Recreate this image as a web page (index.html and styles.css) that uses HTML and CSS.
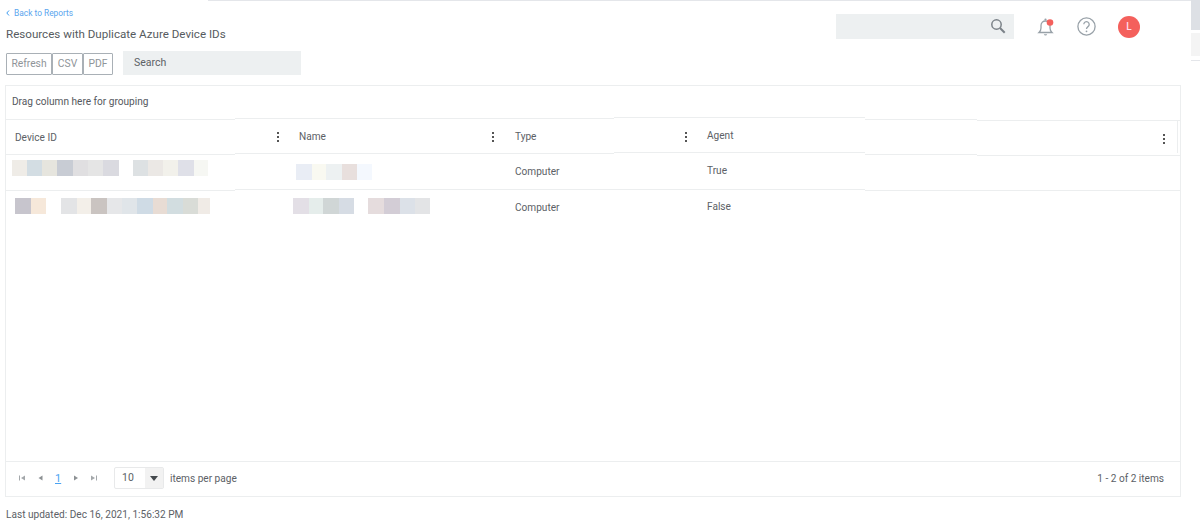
FILE: index.html
```html
<!DOCTYPE html>
<html lang="en">
<head>
<meta charset="utf-8">
<title>Resources with Duplicate Azure Device IDs</title>
<link rel="stylesheet" href="styles.css">
</head>
<body>
<div class="frame">
  <main class="page">
    <div class="top-line"></div>
    <header class="top">
      <div class="heading">
        <a class="back" href="#"><svg class="back-icon" width="4" height="6" viewBox="0 0 4 6"><path d="M3 .5 .8 3 3 5.500" fill="none" stroke="#3d9bf0" stroke-width="1"/></svg>Back to Reports</a>
        <h1 class="title">Resources with Duplicate Azure Device IDs</h1>
        <div class="tools">
          <button class="btn btn-refresh">Refresh</button>
          <button class="btn btn-csv">CSV</button>
          <button class="btn btn-pdf">PDF</button>
          <div class="search-report">Search</div>
        </div>
      </div>
      <div class="actions">
        <div class="global-search">
          <svg width="16" height="16" viewBox="0 0 16 16"><circle cx="6.500" cy="6.500" r="4.700" fill="none" stroke="#7b8288" stroke-width="1.500"/><path d="M10 10l4.700 4.700" stroke="#7b8288" stroke-width="2"/></svg>
        </div>
        <svg class="bell" width="18" height="20" viewBox="0 0 18 20"><path d="M2 15.500c1.500-1.300 2-2.300 2-4.500V8.500C4 5.800 6 4 8.500 4S13 5.800 13 8.500V11c0 2.200.5 3.200 2 4.500z" fill="none" stroke="#98a1a8" stroke-width="1.300"/><circle cx="8.500" cy="2.500" r="1.100" fill="#98a1a8"/><path d="M6.800 17.300a1.800 1.800 0 0 0 3.400 0z" fill="#98a1a8"/><circle cx="13" cy="5.500" r="3.300" fill="#f4605c"/></svg>
        <svg class="help" width="19" height="19" viewBox="0 0 19 19"><circle cx="9.500" cy="9.500" r="8.600" fill="none" stroke="#98a1a8" stroke-width="1.300"/><path d="M6.800 7.300a2.700 2.700 0 1 1 4.200 2.300c-1 .7-1.500 1.200-1.500 2.500" fill="none" stroke="#98a1a8" stroke-width="1.300"/><circle cx="9.500" cy="14.300" r=".9" fill="#98a1a8"/></svg>
        <div class="avatar">L</div>
      </div>
    </header>

    <section class="grid">
      <div class="group-bar">Drag column here for grouping</div>
      <div class="rule">
        <i class="seg seg-a"></i><i class="seg seg-b up"></i><i class="seg seg-c up2"></i><i class="seg seg-d"></i><i class="seg seg-e dn"></i>
      </div>
      <div class="row head">
        <div class="cell c1 lo">Device ID<span class="kebab"></span></div>
        <div class="cell c2 mid">Name<span class="kebab"></span></div>
        <div class="cell c3 mid">Type<span class="kebab"></span></div>
        <div class="cell c4 hi">Agent<span class="kebab"></span></div>
      </div>
      <div class="rule">
        <i class="seg seg-a"></i><i class="seg seg-b up"></i><i class="seg seg-c up2"></i><i class="seg seg-d"></i><i class="seg seg-e dn"></i>
      </div>
      <div class="row body">
        <div class="cell c1 blur-1">
          <span class="tiles"><b class="w15 t1"></b><b class="w15 t2"></b><b class="w15 t3"></b><b class="w16 t4"></b><b class="w15 t5"></b><b class="w15 t6"></b><b class="w16 t7"></b></span>
          <span class="tiles gap"><b class="w15 t8"></b><b class="w15 t9"></b><b class="w15 t10"></b><b class="w16 t11"></b><b class="w14 t12"></b></span>
        </div>
        <div class="cell c2 blur-2">
          <span class="tiles"><b class="w16 n1"></b><b class="w14 n2"></b><b class="w16 n3"></b><b class="w15 n4"></b><b class="w15 n5"></b></span>
        </div>
        <div class="cell c3 mid">Computer</div>
        <div class="cell c4 hi">True</div>
      </div>
      <div class="rule">
        <i class="seg seg-a"></i><i class="seg seg-b up"></i><i class="seg seg-c up"></i><i class="seg seg-d"></i><i class="seg seg-e"></i>
      </div>
      <div class="row body">
        <div class="cell c1 blur-3">
          <span class="tiles"><b class="w16 r1"></b><b class="w15 r2"></b></span>
          <span class="tiles gap-b"><b class="w16 r3"></b><b class="w14 r4"></b><b class="w16 r5"></b><b class="w15 r6"></b><b class="w15 r7"></b><b class="w16 r8"></b><b class="w14 r9"></b><b class="w16 r10"></b><b class="w15 r11"></b><b class="w12 r12"></b></span>
        </div>
        <div class="cell c2 blur-4">
          <span class="tiles"><b class="w16 s1"></b><b class="w14 s2"></b><b class="w16 s3"></b><b class="w15 s4"></b></span>
          <span class="tiles gap-c"><b class="w16 s5"></b><b class="w16 s6"></b><b class="w15 s7"></b><b class="w15 s8"></b></span>
        </div>
        <div class="cell c3 mid">Computer</div>
        <div class="cell c4 hi">False</div>
      </div>
      <div class="spacer"></div>
      <footer class="pager">
        <div class="pager-left">
          <svg class="pg" width="8" height="8" viewBox="0 0 8 8"><path d="M1 1.500h1v5H1zM7 1.500v5L3 4z" fill="#a4a8ab"/></svg>
          <svg class="pg" width="8" height="8" viewBox="0 0 8 8"><path d="M6.500 1.500v5L2.500 4z" fill="#8d9194"/></svg>
          <a class="page-num" href="#">1</a>
          <svg class="pg" width="8" height="8" viewBox="0 0 8 8"><path d="M2 1.500v5L6 4z" fill="#8d9194"/></svg>
          <svg class="pg" width="8" height="8" viewBox="0 0 8 8"><path d="M1 1.500v5L5 4zM6 1.500h1v5H6z" fill="#a4a8ab"/></svg>
          <div class="size-select"><span class="size-value">10</span><span class="size-arrow"><svg width="8" height="5" viewBox="0 0 8 5"><path d="M0 0h8L4 5z" fill="#44494d"/></svg></span></div>
          <span class="per-page">items per page</span>
        </div>
        <div class="count">1 - 2 of 2 items</div>
      </footer>
    </section>
    <p class="updated">Last updated: Dec 16, 2021, 1:56:32 PM</p>
  </main>
  <aside class="side">
    <div class="side-a"></div>
    <div class="side-b"></div>
    <div class="side-c"></div>
  </aside>
</div>
</body>
</html>
```

FILE: styles.css
```css
* { box-sizing: border-box; }
html, body { margin: 0; height: 100%; background: #fff; overflow: hidden; }
body { font-family: Roboto, "Liberation Sans", sans-serif; font-size: 10.1px; color: #5c6166; }
.frame { display: flex; height: 523px; }
.page { width: 1191px; flex: none; padding: 0 10px 0 5px; }
.top-line { height: 1px; margin: 0 -10px 0 203px; background: #e4e6ea; }

.top { display: flex; justify-content: space-between; height: 84px; }
.heading { padding-left: 1px; }
.back { display: flex; align-items: center; gap: 4px; margin-top: 7px; height: 10px; color: #5aa5ee; font-size: 8.4px; text-decoration: none; }
.title { margin: 8px 0 0; font-size: 11.6px; line-height: 16px; font-weight: 400; color: #565b60; }
.tools { display: flex; align-items: flex-start; margin-top: 9px; }
.btn { height: 22px; margin-top: 2px; padding: 0 0 2px; background: #fff; border: 1px solid #a9b0b6; border-radius: 1px; color: #8f9499; font: 10.3px Roboto, sans-serif; }
.btn-refresh { width: 46px; }
.btn-csv { width: 31px; }
.btn-pdf { width: 30px; }
.search-report { width: 178px; height: 24px; margin-left: 10px; padding-left: 11px; line-height: 24px; background: #edf0f1; color: #5c6166; font-size: 10.5px; }

.actions { display: flex; align-items: flex-start; padding-top: 13px; margin-right: 41px; }
.global-search { width: 178px; height: 25px; padding: 4px 8px 0 0; background: #edf0f1; display: flex; justify-content: flex-end; }
.bell { margin: 3px 0 0 23px; }
.help { margin: 3px 0 0 22px; }
.avatar { width: 22px; height: 22px; margin: 2px 0 0 22px; border-radius: 50%; background: #f4605c; color: #fde; font-size: 10px; font-weight: 500; line-height: 22px; text-align: center; }

.grid { width: 1176px; height: 412px; border: 1px solid #eceeef; display: flex; flex-direction: column; }
.group-bar { height: 32px; flex: none; padding-left: 6px; line-height: 31px; color: #55595e; }
.rule { display: flex; height: 2px; flex: none; }
.seg { display: block; height: 1px; background: #eceeef; margin-top: 1px; }
.seg.up { margin-top: 0; }
.seg.up2 { margin-top: -1px; }
.seg.dn { margin-top: 2px; }
.seg-a { width: 229px; }
.seg-b { width: 379px; }
.seg-c { width: 251px; }
.seg-d { width: 112px; }
.seg-e { flex: 1; }
.row { display: flex; flex: none; }
.head { height: 33px; }
.body { height: 34px; }
.cell { position: relative; height: 100%; }
.c1 { width: 288px; padding-left: 9px; }
.c2 { width: 216px; padding-left: 5px; }
.c3 { width: 192px; padding-left: 5px; }
.c4 { flex: 1; padding-left: 5px; }
.head .c4 { border-right: 1px solid #eceeef; margin-right: 2px; }
.lo { line-height: 35px; }
.mid { line-height: 34px; }
.hi { line-height: 32px; }
.kebab { position: absolute; right: 15px; top: 12px; width: 2px; height: 10px; background: radial-gradient(circle at 1px 1px, #555 1px, transparent 1.2px) 0 0 / 2px 4px repeat-y; }
.head .c2 .kebab { right: 16px; }
.head .c4 .kebab { right: 12px; top: 14px; }
.blur-1, .blur-2, .blur-3, .blur-4 { display: flex; }
.blur-1 { padding: 5px 0 0 6px; }
.blur-2 { padding: 9px 0 0 2px; }
.blur-3 { padding: 7px 0 0 9px; }
.blur-4 { padding: 7px 0 0 0; }
.blur-4 .tiles:first-child { margin-left: -1px; }
.tiles { display: flex; height: 16px; }
.gap { margin-left: 14px; }
.gap-b { margin-left: 15px; }
.gap-c { margin-left: 14px; }
.tiles b { display: block; height: 100%; }
.w12 { width: 12px; } .w14 { width: 14px; } .w15 { width: 15px; } .w16 { width: 16px; }
.t1 { background: #efece7; } .t2 { background: #d3dde3; } .t3 { background: #e6e5de; } .t4 { background: #c8ccd4; }
.t5 { background: #e0dfe1; } .t6 { background: #e5e5e5; } .t7 { background: #dadae0; } .t8 { background: #dde1e3; }
.t9 { background: #ebe8e5; } .t10 { background: #f2f1eb; } .t11 { background: #dfe0e8; } .t12 { background: #f6f7f3; }
.n1 { background: #e9edf5; } .n2 { background: #f9f9f1; } .n3 { background: #edf1f2; } .n4 { background: #e8dfdd; } .n5 { background: #f4f8fe; }
.r1 { background: #c7c5cd; } .r2 { background: #f6e8da; } .r3 { background: #e3e4e6; } .r4 { background: #f3efe9; }
.r5 { background: #cac4c1; } .r6 { background: #e6e7e9; } .r7 { background: #e0e5e9; } .r8 { background: #cfdbe5; }
.r9 { background: #e8dcd4; } .r10 { background: #d2dde0; } .r11 { background: #d9dcd7; } .r12 { background: #f0ebe6; }
.s1 { background: #e3dfe6; } .s2 { background: #e5edeb; } .s3 { background: #d0d6d6; } .s4 { background: #d6dce4; }
.s5 { background: #e5dcdd; } .s6 { background: #d3cdd6; } .s7 { background: #dce1e8; } .s8 { background: #e3e4e6; }
.spacer { flex: 1; }
.pager { height: 35px; flex: none; border-top: 1px solid #eceeef; display: flex; justify-content: space-between; align-items: center; padding: 0 16px 2px 12px; }
.pager-left { display: flex; align-items: center; }
.pg { margin-right: 10px; }
.page-num { width: 6px; margin: 0 11px 0 1px; color: #4aa3f2; text-decoration: underline; font-size: 11px; }
.size-select { display: flex; width: 50px; height: 22px; margin-left: 6px; border: 1px solid #e8e9ea; border-radius: 2px; }
.size-value { flex: 1; padding-left: 7px; line-height: 20px; font-size: 10.5px; }
.size-arrow { width: 18px; background: #f2f2f2; display: flex; align-items: center; justify-content: center; }
.per-page { margin-left: 6px; }
.updated { margin: 12px 0 0 1px; line-height: 12px; color: #5c6166; }

.side { flex: 1; }
.side-a { height: 30px; background: #dde0e5; }
.side-b { height: 23px; margin-top: 3px; background: #f4f4f4; }
.side-c { height: 1px; margin-top: 4px; background: #e4e6ea; }
```
